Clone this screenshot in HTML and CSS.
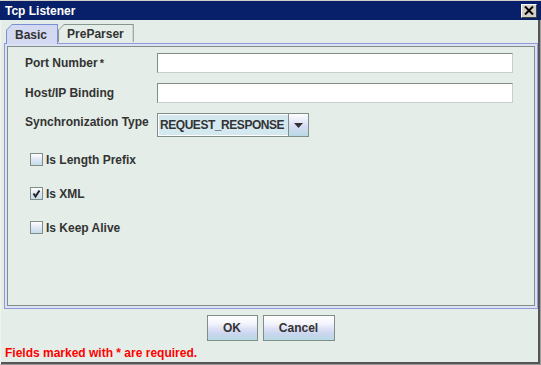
FILE: index.html
```html
<!DOCTYPE html>
<html lang="en">
<head>
    <meta charset="UTF-8">
    <title>Tcp Listener</title>
    <link rel="stylesheet" href="styles.css">
</head>
<body>
<div class="window">
    <div class="titlebar">
        <span class="title">Tcp Listener</span>
        <span class="close">
            <svg width="10" height="9" viewBox="0 0 10 9">
                <path d="M1,0.5 L9,8.5 M9,0.5 L1,8.5" stroke="#000" stroke-width="2" fill="none"/>
            </svg>
        </span>
    </div>

    <div class="frame">
        <div class="tabs">
            <div class="tab tab-on"><span>Basic</span></div>
            <div class="tab"><span>PreParser</span></div>
        </div>

        <div class="panel">
            <div class="panel-in">
                <div class="row">
                    <label class="label">Port Number<span class="req">*</span></label>
                    <div class="field"></div>
                </div>
                <div class="row">
                    <label class="label">Host/IP Binding</label>
                    <div class="field"></div>
                </div>
                <div class="row row-combo">
                    <label class="label label-top">Synchronization Type</label>
                    <div class="combo">
                        <span class="combo-text">REQUEST_RESPONSE</span>
                        <span class="combo-btn">
                            <svg width="9" height="5" viewBox="0 0 9 5"><path d="M0,0 H9 L4.5,5 Z" fill="#333"/></svg>
                        </span>
                    </div>
                </div>

                <div class="checks">
                    <div class="check">
                        <span class="box"></span>
                        <span>Is Length Prefix</span>
                    </div>
                    <div class="check">
                        <span class="box">
                            <svg width="11" height="11" viewBox="0 0 11 11">
                                <path d="M2.5,5.5 L4.5,8.5 L8.5,2.5" stroke="#222" stroke-width="2" fill="none"/>
                            </svg>
                        </span>
                        <span>Is XML</span>
                    </div>
                    <div class="check">
                        <span class="box"></span>
                        <span>Is Keep Alive</span>
                    </div>
                </div>
            </div>
        </div>

        <div class="buttons">
            <button class="btn btn-ok">OK</button>
            <button class="btn btn-cancel">Cancel</button>
        </div>

        <div class="note">Fields marked with * are required.</div>
    </div>
</div>
</body>
</html>
```

FILE: styles.css
```css
body {
    margin: 0;
    font-family: "Liberation Sans", Arial, sans-serif;
    font-size: 12px;
    font-weight: bold;
    color: #333;
}

.window {
    width: 541px;
    height: 365px;
    box-sizing: border-box;
    display: flex;
    flex-direction: column;
    border-top: 1px solid #d4d0c8;
    background: #e4ede7;
}

.titlebar {
    height: 19px;
    background: #08206a;
    display: flex;
    align-items: center;
    justify-content: space-between;
    padding: 0 4px 0 5px;
}

.title {
    color: #fff;
    font-size: 12px;
}

.close {
    width: 16px;
    height: 14px;
    box-sizing: border-box;
    background: #d4d0c8;
    border-top: 1px solid #fff;
    border-left: 1px solid #fff;
    border-right: 1px solid #404040;
    border-bottom: 1px solid #404040;
    display: flex;
    align-items: center;
    justify-content: center;
}

.frame {
    flex: 1;
    display: flex;
    flex-direction: column;
    border-left: 1px solid #f2f2ee;
    border-right: 1px solid #a0a0a0;
    border-bottom: 1px solid #9a9a9a;
    box-shadow: inset -2px -2px 0 #555;
}

/* tabs */
.tabs {
    height: 23px;
    display: flex;
    align-items: flex-end;
    padding-left: 5px;
}

.tab {
    height: 18px;
    padding: 1px 1px 0 1px;
    box-sizing: border-box;
    background: #86958e;
    clip-path: polygon(0 6px, 6px 0, 100% 0, 100% 100%, 0 100%);
    margin-bottom: 1px;
}

.tab span {
    display: flex;
    align-items: center;
    height: 100%;
    padding: 0 9px 0 8px;
    background: #e4ede7;
    clip-path: polygon(0 5px, 5px 0, 100% 0, 100% 100%, 0 100%);
}

.tab-on {
    height: 20px;
    margin-bottom: -1px;
    background: #7c8ed6;
    position: relative;
    z-index: 1;
    padding-bottom: 0;
}

.tab-on span {
    background: #d3d9f1;
    padding: 0 10px 0 8px;
}

/* panel */
.panel {
    height: 266px;
    box-sizing: border-box;
    margin: 0 2px 0 3px;
    border: 1px solid #8f9ad8;
    padding: 2px;
    background: #dde1f3;
}

.panel-in {
    height: 100%;
    box-sizing: border-box;
    border: 1px solid #7f8e87;
    background: #e4ede7;
    padding: 5px 0 0 17px;
}

.row {
    display: flex;
    align-items: center;
    height: 20px;
    margin-top: 1px;
    margin-bottom: 10px;
}

.row-combo {
    height: 24px;
    align-items: flex-start;
}

.label {
    width: 132px;
    line-height: 14px;
}

.req {
    margin-left: 2px;
    font-size: 11px;
}

.label-top {
    margin-top: 2px;
}

.field {
    width: 356px;
    height: 20px;
    box-sizing: border-box;
    background: #fff;
    border: 1px solid #7f8e87;
    border-right-color: #c8d0cc;
    border-bottom-color: #c8d0cc;
}

.combo {
    width: 152px;
    height: 24px;
    box-sizing: border-box;
    display: flex;
    border: 1px solid #7f8e87;
    background: #d4e8ef;
}

.combo-text {
    flex: 1;
    display: flex;
    align-items: center;
    padding-left: 1px;
    letter-spacing: -0.45px;
    white-space: nowrap;
    overflow: hidden;
    border: 1px solid #fff;
    border-right: none;
}

.combo-btn {
    width: 19px;
    flex: none;
    border-left: 1px solid #7f8e87;
    display: flex;
    align-items: center;
    justify-content: center;
    background: linear-gradient(#ffffff, #dfe2f6 45%, #d8dcf4 55%, #b8d9e6);
}

/* checkboxes */
.checks {
    display: flex;
    flex-direction: column;
    gap: 21px;
    padding: 6px 0 0 5px;
}

.check {
    display: flex;
    align-items: center;
    gap: 3px;
    height: 13px;
}

.box {
    width: 13px;
    height: 13px;
    box-sizing: border-box;
    border: 1px solid #7f8e87;
    background: linear-gradient(#ffffff, #e0e6f5 50%, #c6dde8);
    display: flex;
    align-items: center;
    justify-content: center;
}

/* bottom */
.buttons {
    display: flex;
    justify-content: center;
    gap: 5px;
    margin-top: 6px;
}

.btn {
    height: 26px;
    font-family: "Liberation Sans", Arial, sans-serif;
    font-size: 12px;
    font-weight: bold;
    color: #333;
    border: 1px solid #7f8e87;
    padding: 0;
    background: linear-gradient(#ffffff, #f4f5fc 30%, #dcdff6 55%, #c9d6ee 75%, #b8dae4);
}

.btn-ok {
    width: 51px;
}

.btn-cancel {
    width: 72px;
}

.note {
    color: #ff0000;
    line-height: 14px;
    padding: 5px 0 0 4px;
}
```
